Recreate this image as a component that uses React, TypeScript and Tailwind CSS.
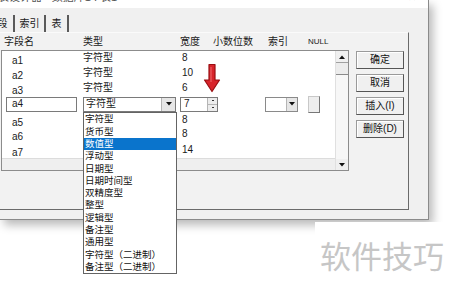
import React from "react";

const rows = [
  { name: "a1", type: "字符型", width: "8", h: "h-[14px]" },
  { name: "a2", type: "字符型", width: "10", h: "h-[15px]" },
  { name: "a3", type: "字符型", width: "6", h: "h-[15px]" },
];
const rows2 = [
  { name: "a5", type: "", width: "8", h: "h-[13px]" },
  { name: "a6", type: "", width: "8", h: "h-[15px]" },
  { name: "a7", type: "", width: "14", h: "h-[17px]" },
];

const items = [
  "字符型",
  "货币型",
  "数值型",
  "浮动型",
  "日期型",
  "日期时间型",
  "双精度型",
  "整型",
  "逻辑型",
  "备注型",
  "通用型",
  "字符型（二进制）",
  "备注型（二进制）",
];

function Down() {
  return (
    <svg width="6" height="4" viewBox="0 0 6 4">
      <path d="M0 0H6L3 3.5Z" fill="#111" />
    </svg>
  );
}
function Up() {
  return (
    <svg width="6" height="4" viewBox="0 0 6 4">
      <path d="M0 4H6L3 0.5Z" fill="#111" />
    </svg>
  );
}

function DataRow({ r }: { r: { name: string; type: string; width: string; h: string } }) {
  return (
    <div className={`flex items-center ${r.h}`}>
      <div className="ml-[4px] w-[71px] pl-[6px] translate-y-[3px] text-[10px] leading-none">{r.name}</div>
      <div className="ml-[6px] w-[93px] text-[10px] leading-none">{r.type}</div>
      <div className="ml-[4px] w-[38px] pl-[2px] text-[10px] leading-none">{r.width}</div>
    </div>
  );
}

function Btn({ label }: { label: string }) {
  return (
    <div className="w-[48px] h-[18px] flex items-center justify-center border border-[#9a9a9a] border-r-[#555] border-b-[#555] bg-[#f0f0f0] shadow-[inset_1px_1px_0_#ffffff] text-[10px] leading-none text-[#111]">
      {label}
    </div>
  );
}

export default function App() {
  return (
    <div className="relative w-[450px] h-[288px] overflow-hidden bg-white text-[#1a1a1a] font-['Liberation_Sans','Noto_Sans_CJK_SC',sans-serif]">
      {/* window */}
      <div className="w-[429px] h-[220px] bg-[#f0f0f0] border-r border-b border-[#8a8a8a] shadow-[4px_5px_9px_rgba(0,0,0,0.28)] flex flex-col">
        {/* title bar */}
        <div className="h-[8px] bg-white overflow-hidden flex justify-between">
          <div className="mt-[-8px] ml-[-2px] text-[11px] leading-none text-[#555]">表设计器 - 数据库1 : 表1</div>
          <div className="mt-[-7px] mr-[12px] text-[10px] leading-none text-[#444]">✕</div>
        </div>
        {/* tabs */}
        <div className="h-[24px] flex items-end text-[10px] leading-none">
          <div className="ml-[-8px] w-[23px] h-[17px] border-r-2 border-[#5a5a5a] flex items-center justify-center">段</div>
          <div className="w-[31px] h-[17px] border-r-2 border-[#5a5a5a] flex items-center justify-center">索引</div>
          <div className="w-[23px] h-[17px] border-r-2 border-[#5a5a5a] flex items-center justify-center">表</div>
        </div>
        {/* panel */}
        <div className="w-[409px] h-[178px] border-t border-t-[#fafafa] border-r border-b border-r-[#6b6b6b] border-b-[#6b6b6b] bg-[#f2f2f2] flex">
          <div className="w-[349px] flex flex-col">
            {/* header */}
            <div className="h-[17px] flex items-center text-[10px] leading-none">
              <div className="ml-[4px] w-[79px]">字段名</div>
              <div className="w-[97px]">类型</div>
              <div className="w-[33px]">宽度</div>
              <div className="w-[55px]">小数位数</div>
              <div className="w-[40px]">索引</div>
              <div className="text-[8px]">NULL</div>
            </div>
            {/* list */}
            <div className="ml-[1px] h-[121px] border-l border-t border-b border-r border-[#8c8c8c] flex">
              <div className="flex-1 flex flex-col">
                <div className="h-[107px] bg-white flex flex-col">
                  {rows.map((r) => (
                    <DataRow key={r.name} r={r} />
                  ))}
                  {/* edit row */}
                  <div className="h-[18px] flex items-center text-[10px] leading-none">
                    <div className="ml-[4px] w-[71px] h-[15px] border border-[#7a7a7a] bg-white pl-[5px] flex items-center">a4</div>
                    <div className="ml-[6px] w-[93px] h-[15px] border border-[#7a7a7a] bg-white flex">
                      <div className="flex-1 pl-[2px] flex items-center">字符型</div>
                      <div className="w-[14px] bg-[#e6e6e6] border-l border-[#b5b5b5] flex items-center justify-center">
                        <Down />
                      </div>
                    </div>
                    <div className="ml-[4px] w-[38px] h-[15px] border border-[#7a7a7a] bg-white flex">
                      <div className="flex-1 pl-[3px] flex items-center">7</div>
                      <div className="w-[10px] border-l border-[#b5b5b5] flex flex-col">
                        <div className="flex-1 bg-[#ececec] border-b border-[#b5b5b5] flex items-center justify-center">
                          <div className="w-[2px] h-[1px] bg-[#333]" />
                        </div>
                        <div className="flex-1 bg-[#ececec] flex items-center justify-center">
                          <div className="w-[2px] h-[1px] bg-[#333]" />
                        </div>
                      </div>
                    </div>
                    <div className="ml-[47px] w-[33px] h-[15px] border border-[#8a8a8a] bg-white flex">
                      <div className="flex-1" />
                      <div className="w-[11px] bg-[#e6e6e6] border-l border-[#b5b5b5] flex items-center justify-center">
                        <Down />
                      </div>
                    </div>
                    <div className="ml-[10px] w-[12px] h-[17px] border border-[#c8c8c8] border-r-[#777] border-b-[#777] bg-[#eeeeee]" />
                  </div>
                  {rows2.map((r) => (
                    <DataRow key={r.name} r={r} />
                  ))}
                </div>
                <div className="flex-1 bg-[#efefef] border-t border-[#dcdcdc]" />
              </div>
              {/* vscroll */}
              <div className="w-[13px] bg-[#f7f7f7] border-l border-[#e0e0e0] flex flex-col">
                <div className="h-[12px] border-b border-[#a0a0a0] flex items-center justify-center bg-[#f0f0f0]">
                  <Up />
                </div>
                <div className="h-[12px] border-b border-[#8a8a8a] bg-[#ececec]" />
                <div className="flex-1" />
                <div className="h-[11px] flex items-center justify-center bg-[#f0f0f0]">
                  <Down />
                </div>
              </div>
            </div>
          </div>
          {/* buttons */}
          <div className="ml-[7px] pt-[18px] flex flex-col gap-[5px]">
            <Btn label="确定" />
            <Btn label="取消" />
            <Btn label="插入(I)" />
            <Btn label="删除(D)" />
          </div>
        </div>
      </div>

      {/* red arrow */}
      <svg className="absolute left-[203px] top-[63px]" width="18" height="30" viewBox="0 0 18 30">
        <path d="M6 1.5H12V17H16.5L9 28.5L1.5 17H6Z" fill="#d8242b" stroke="#9a0e12" strokeWidth="1.2" strokeLinejoin="round" />
        <path d="M8 4V19" stroke="#f06a6e" strokeWidth="1" />
      </svg>

      {/* dropdown list */}
      <div className="absolute left-[83px] top-[112px] w-[94px] bg-white border border-[#646464] flex flex-col text-[9.5px] leading-none">
        {items.map((t, i) => (
          <div
            key={t}
            className={
              i === 2
                ? "h-[12.3px] pl-[1px] flex items-center bg-[#0a74cc] text-white"
                : "h-[12.3px] pl-[1px] flex items-center text-[#111]"
            }
          >
            {t}
          </div>
        ))}
      </div>

      {/* watermark */}
      <div className="absolute left-[315px] top-[222px] w-[135px] h-[66px] bg-white pt-[17px] pl-[5px] text-[31px] leading-none text-[#c6c6c6] font-['Noto_Sans_CJK_SC',sans-serif]">
        软件技巧
      </div>
    </div>
  );
}
